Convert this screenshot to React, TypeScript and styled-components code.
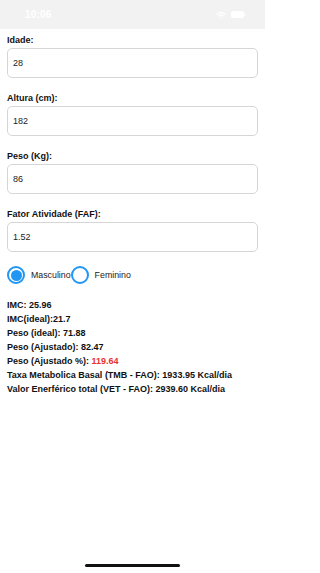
import React, {useState} from 'react';
import styled, {createGlobalStyle} from 'styled-components';

const GlobalStyle = createGlobalStyle`
	html, body {
		margin: 0;
		padding: 0;
		background: #ffffff;
	}
	* {
		box-sizing: border-box;
	}
`;

const Screen = styled.div`
	display: flex;
	flex-direction: column;
	width: 265px;
	height: 573px;
	background: #ffffff;
	font-family: 'Liberation Sans', Arial, sans-serif;
	color: #111111;
	overflow: hidden;
`;

const StatusBar = styled.div`
	display: flex;
	align-items: center;
	justify-content: space-between;
	height: 29px;
	padding: 0 19px 0 25px;
	background: #f2f2f2;
	color: #ffffff;
`;

const Clock = styled.span`
	font-size: 10px;
	font-weight: 700;
	letter-spacing: 0.2px;
`;

const StatusIcons = styled.div`
	display: flex;
	align-items: center;
	gap: 5px;
`;

const Content = styled.div`
	display: flex;
	flex-direction: column;
	padding: 4px 7px 0 7px;
`;

const Field = styled.div`
	display: flex;
	flex-direction: column;
	margin-bottom: 13px;
`;

const Label = styled.label`
	font-size: 9px;
	line-height: 14px;
	font-weight: 700;
	margin-bottom: 1px;
`;

const Input = styled.input`
	height: 30px;
	width: 100%;
	border: 1px solid #d6d6d6;
	border-radius: 5px;
	padding: 0 5px;
	font-family: 'Liberation Sans', Arial, sans-serif;
	font-size: 9px;
	color: #222222;
	background: #ffffff;
	outline: none;
`;

const RadioRow = styled.div`
	display: flex;
	align-items: center;
	height: 20px;
	margin-bottom: 13px;
`;

const RadioOption = styled.button`
	display: flex;
	align-items: center;
	gap: 6px;
	border: none;
	background: none;
	padding: 0;
	cursor: pointer;
	font-family: 'Liberation Sans', Arial, sans-serif;
	font-size: 8.8px;
	color: #222222;
`;

const RadioCircle = styled.span<{$checked: boolean}>`
	display: inline-flex;
	align-items: center;
	justify-content: center;
	width: 18px;
	height: 18px;
	border-radius: 50%;
	border: 2px solid #2196f3;
	background: #ffffff;

	&::after {
		content: '';
		width: 11px;
		height: 11px;
		border-radius: 50%;
		background: ${(p) => (p.$checked ? '#2196f3' : 'transparent')};
	}
`;

const Results = styled.div`
	display: flex;
	flex-direction: column;
`;

const ResultLine = styled.div`
	font-size: 9px;
	line-height: 14px;
	font-weight: 700;
	white-space: nowrap;
`;

const Highlight = styled.span`
	color: #e8312f;
`;

const HomeBar = styled.div`
	align-self: center;
	width: 95px;
	height: 3px;
	border-radius: 2px;
	background: #111111;
	margin: auto 0 6px 0;
`;

const fields = [
	{label: 'Idade:', value: '28'},
	{label: 'Altura (cm):', value: '182'},
	{label: 'Peso (Kg):', value: '86'},
	{label: 'Fator Atividade (FAF):', value: '1.52'},
];

const App = () => {
	const [values, setValues] = useState(fields.map((f) => f.value));
	const [sex, setSex] = useState<'m' | 'f'>('m');

	return (
		<Screen>
			<GlobalStyle />
			<StatusBar>
				<Clock>10:06</Clock>
				<StatusIcons>
					<svg width="10" height="8" viewBox="0 0 10 8">
						<path d="M1 3.2a5.6 5.6 0 0 1 8 0" stroke="#fff" strokeWidth="1.3" fill="none" strokeLinecap="round" />
						<path d="M2.7 4.9a3.2 3.2 0 0 1 4.6 0" stroke="#fff" strokeWidth="1.3" fill="none" strokeLinecap="round" />
						<circle cx="5" cy="6.6" r="0.9" fill="#fff" />
					</svg>
					<svg width="15" height="7" viewBox="0 0 15 7">
						<rect x="0" y="0" width="13" height="7" rx="2" fill="#fff" />
						<rect x="13.5" y="2.3" width="1.2" height="2.4" rx="0.5" fill="#fff" />
					</svg>
				</StatusIcons>
			</StatusBar>
			<Content>
				{fields.map((f, i) => (
					<Field key={f.label}>
						<Label>{f.label}</Label>
						<Input
							value={values[i]}
							onChange={(e) => {
								const next = [...values];
								next[i] = e.target.value;
								setValues(next);
							}}
						/>
					</Field>
				))}
				<RadioRow>
					<RadioOption onClick={() => setSex('m')}>
						<RadioCircle $checked={sex === 'm'} />
						Masculino
					</RadioOption>
					<RadioOption onClick={() => setSex('f')}>
						<RadioCircle $checked={sex === 'f'} />
						Feminino
					</RadioOption>
				</RadioRow>
				<Results>
					<ResultLine>IMC: 25.96</ResultLine>
					<ResultLine>IMC(ideal):21.7</ResultLine>
					<ResultLine>Peso (ideal): 71.88</ResultLine>
					<ResultLine>Peso (Ajustado): 82.47</ResultLine>
					<ResultLine>
						Peso (Ajustado %): <Highlight>119.64</Highlight>
					</ResultLine>
					<ResultLine>Taxa Metabolica Basal (TMB - FAO): 1933.95 Kcal/dia</ResultLine>
					<ResultLine>Valor Enerférico total (VET - FAO): 2939.60 Kcal/dia</ResultLine>
				</Results>
			</Content>
			<HomeBar />
		</Screen>
	);
};

export default App;
